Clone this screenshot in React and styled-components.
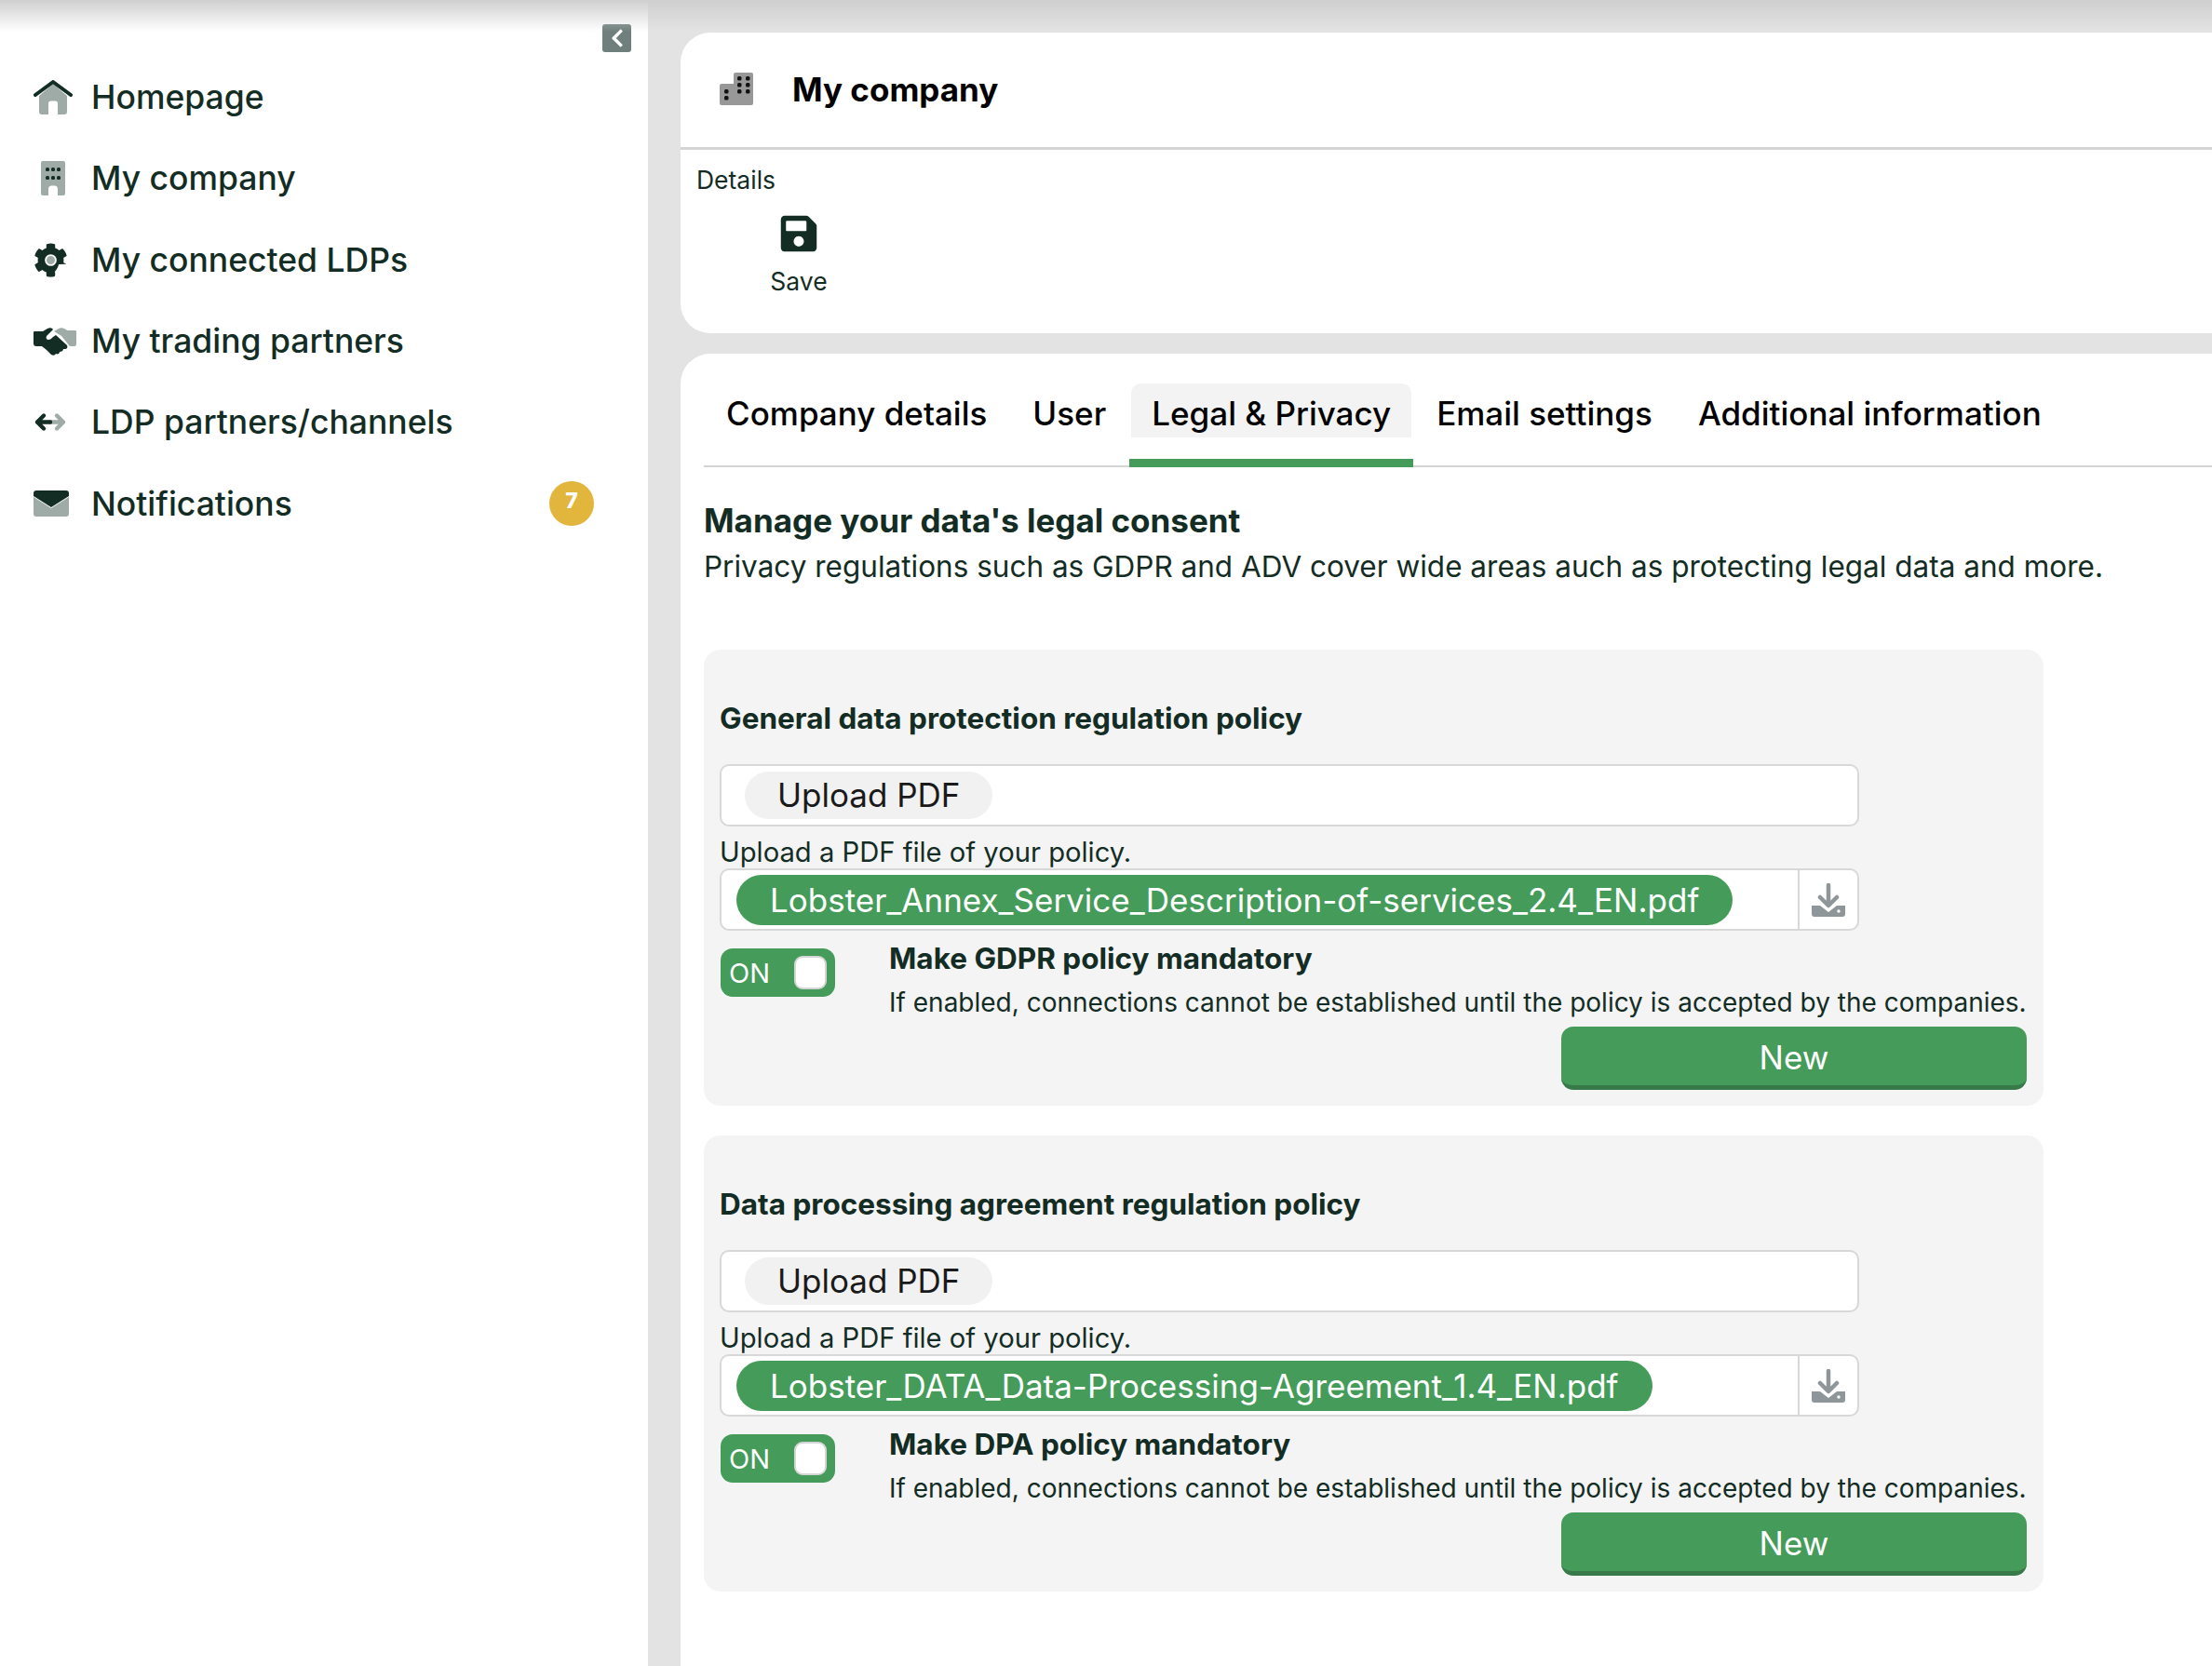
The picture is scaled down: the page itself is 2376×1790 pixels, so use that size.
import styled, { createGlobalStyle } from "styled-components";
import { FaSave, FaChevronLeft } from "react-icons/fa";

const GlobalStyle = createGlobalStyle`
html,body{
    margin:0;
    padding:0;
    height:1790px;
    overflow:hidden;
    background:#e3e3e3;
    font-family:"Inter","Liberation Sans",sans-serif;
    color:#132c24;
}
*{box-sizing:border-box;}
`

const Page = styled.div`
position:relative;
display:flex;
width:2376px;
height:1790px;
overflow:hidden;
background:#e3e3e3;
`
const TopShade = styled.div`
position:absolute;
top:0;
left:0;
right:0;
height:34px;
background:linear-gradient(#cfcfcf,rgba(207,207,207,0));
pointer-events:none;
`
const Sidebar = styled.aside`
flex:0 0 696px;
background:#fff;
padding:26px 18px 0 36px;
`
const CollapseRow = styled.div`
display:flex;
justify-content:flex-end;
height:30px;
margin-bottom:5px;
`
const CollapseBtn = styled.button`
width:31px;
height:30px;
padding:0;
border:0;
border-radius:3px;
background:#6f807c;
color:#fff;
display:flex;
align-items:center;
justify-content:center;
font-size:22px;
`
const NavList = styled.nav`
display:flex;
flex-direction:column;
`
const NavItem = styled.div`
display:flex;
align-items:center;
height:87.300px;
font-size:35.500px;
font-weight:500;
color:#132c24;
`
const NavIcon = styled.span`
flex:0 0 62px;
width:62px;
display:flex;
svg{display:block;}
`
const NavLabel = styled.span`
flex:1;
`
const Badge = styled.span`
width:48px;
height:48px;
border-radius:50%;
background:#e2b53c;
color:#fff;
font-size:23px;
font-weight:800;
display:flex;
align-items:center;
justify-content:center;
margin-right:40px;
padding-bottom:6px;
`
const Main = styled.main`
flex:1;
min-width:0;
padding:35px 0 0 35px;
display:flex;
flex-direction:column;
gap:22px;
`
const DetailsCard = styled.section`
height:323px;
background:#fff;
border-radius:32px 0 0 32px;
`
const CardHeader = styled.header`
height:126px;
border-bottom:3px solid #d5d5d5;
display:flex;
align-items:center;
padding:0 0 2px 42px;
gap:42px;
`
const CardTitle = styled.h1`
margin:0;
font-size:35px;
font-weight:700;
color:#000;
`
const DetailsBody = styled.div`
padding:15px 0 0 17px;
`
const SmallLabel = styled.div`
font-size:26.500px;
line-height:34px;
`
const SaveAction = styled.div`
width:120px;
margin:19px 0 0 50px;
display:flex;
flex-direction:column;
align-items:center;
gap:12px;
color:#132c24;
font-size:26.500px;
line-height:34px;
`
const ContentCard = styled.section`
flex:1;
background:#fff;
border-radius:32px 0 0 0;
padding:0 0 0 25px;
`
const TabRow = styled.div`
height:122px;
display:flex;
align-items:flex-end;
gap:1px;
border-bottom:2px solid #d5d5d5;
`
const Tab = styled.div`
position:relative;
height:100%;
padding:32px 24px 0;
font-size:35px;
font-weight:500;
line-height:64px;
color:#000;
white-space:nowrap;
&::before{
    content:"";
    display:${p => (p.$active ? "block" : "none")};
    position:absolute;
    z-index:0;
    left:2px;
    right:2px;
    top:32px;
    height:58px;
    border-radius:10px 10px 0 0;
    background:#f3f3f3;
}
&::after{
    content:"";
    display:${p => (p.$active ? "block" : "none")};
    position:absolute;
    left:0;
    right:0;
    bottom:-2px;
    height:9px;
    background:#459b59;
}
`
const TabText = styled.span`
position:relative;
z-index:1;
`
const Intro = styled.div`
margin-top:33px;
`
const IntroTitle = styled.h2`
margin:0;
font-size:35px;
line-height:48px;
font-weight:700;
`
const IntroText = styled.p`
margin:3px 0 0;
font-size:31.500px;
line-height:46px;
font-weight:400;
`
const PanelStack = styled.div`
margin-top:66px;
width:1439px;
display:flex;
flex-direction:column;
gap:32px;
`
const Panel = styled.div`
height:490px;
background:#f4f4f4;
border-radius:18px;
padding:52px 18px 0 17px;
`
const PanelTitle = styled.h3`
margin:0 0 27px;
font-size:31.500px;
line-height:44px;
font-weight:700;
`
const FieldBox = styled.div`
width:1224px;
height:67px;
background:#fff;
border:2px solid #d8d8d8;
border-radius:10px;
display:flex;
align-items:center;
`
const UploadPill = styled.span`
margin-left:25px;
height:51px;
padding:0 35px;
border-radius:26px;
background:#f1f1f1;
color:#1a1a1a;
font-size:35px;
line-height:51px;
`
const Hint = styled.div`
height:45px;
padding-top:10px;
font-size:29.200px;
line-height:36px;
`
const FileSlot = styled.div`
flex:1;
min-width:0;
display:flex;
padding-left:16px;
`
const FilePill = styled.span`
height:54px;
padding:0 36px;
border-radius:27px;
background:#459b59;
color:#fff;
font-size:35px;
line-height:54px;
white-space:nowrap;
`
const DownloadCell = styled.div`
flex:0 0 64px;
height:100%;
border-left:2px solid #d8d8d8;
display:flex;
align-items:center;
justify-content:center;
`
const ToggleRow = styled.div`
display:flex;
margin-top:10px;
`
const Toggle = styled.div`
flex:0 0 123px;
height:52px;
margin:9px 58px 0 1px;
padding:0 9px;
border-radius:13px;
background:#459b59;
color:#fff;
font-size:29px;
display:flex;
align-items:center;
justify-content:space-between;
`
const Knob = styled.span`
width:35px;
height:36px;
border-radius:9px;
background:#fff;
border:2px solid #d5d5d5;
`
const ToggleText = styled.div`
min-width:0;
`
const ToggleTitle = styled.div`
font-size:31.500px;
line-height:40px;
font-weight:700;
`
const ToggleDesc = styled.div`
margin-top:7px;
font-size:28px;
line-height:40px;
white-space:nowrap;
`
const ActionRow = styled.div`
display:flex;
justify-content:flex-end;
margin-top:6px;
`
const NewButton = styled.button`
width:500px;
height:68px;
padding:3px 0 0;
border:0;
border-bottom:5px solid #38794a;
border-radius:13px;
background:#459b59;
color:#fff;
font-family:inherit;
font-size:35px;
`

// duotone style icons, dark stroke over a lighter base
const HomeIcon = () => (
    <svg width="42" height="37" viewBox="0 0 42 37">
        <path d="M6 17 21 4l15 13v17a3 3 0 0 1-3 3h-7V25a2.500 2.500 0 0 0-2.500-2.500h-5A2.500 2.500 0 0 0 16 25v12H9a3 3 0 0 1-3-3z" fill="#9faba7" />
        <path d="M2 16 21 2l19 14" fill="none" stroke="#132c24" strokeWidth="4" strokeLinecap="round" strokeLinejoin="round" />
    </svg>
)
const BuildingIcon = () => (
    <svg width="42" height="37" viewBox="0 0 42 37">
        <path d="M7 2a2 2 0 0 1 2-2h22a2 2 0 0 1 2 2v33a2 2 0 0 1-2 2h-6v-7a3.500 3.500 0 0 0-3.500-3.500h-3A3.500 3.500 0 0 0 15 30v7H9a2 2 0 0 1-2-2z" fill="#9faba7" transform="translate(1 0)" />
        {[13, 19, 25].map(x => [9, 18].map(y => <rect key={x + "-" + y} x={x} y={y - 2} width="4" height="4" rx="1.500" fill="#132c24" />))}
    </svg>
)
const GearIcon = () => (
    <svg width="42" height="37" viewBox="0 0 512 512" preserveAspectRatio="xMinYMid meet">
        <path d="M487 316l-42-25a191 191 0 0 0 0-70l42-25c5-3 7-9 5-14-11-35-30-67-54-93-4-4-10-5-15-2l-42 25a187 187 0 0 0-60-35V28c0-6-4-11-9-12a195 195 0 0 0-112 0c-5 1-9 6-9 12v49a193 193 0 0 0-60 35L89 88c-5-3-11-2-15 2-24 26-43 58-54 93-2 5 0 11 5 14l42 25a191 191 0 0 0 0 70l-42 25c-5 3-7 9-5 14 11 35 30 67 54 93 4 4 10 5 15 2l42-25a187 187 0 0 0 60 35v49c0 6 4 11 9 12a195 195 0 0 0 112 0c5-1 9-6 9-12v-49a193 193 0 0 0-60-35l42 25c5 3 11 2 15-2 24-26 43-58 54-93 2-5 0-11-5-14z" fill="#132c24" />
        <circle cx="256" cy="256" r="88" fill="#fff" />
        <circle cx="256" cy="256" r="62" fill="#9faba7" />
    </svg>
)
const HandshakeIcon = () => (
    <svg width="46" height="30" viewBox="0 0 46 30">
        <path d="M22 4l5-3c2-1 4-1 6 0l3 2h9a1 1 0 0 1 1 1v14a2 2 0 0 1-2 2h-5L30 9z" fill="#9faba7" />
        <path d="M0 5a1 1 0 0 1 1-1h9l5-3c2-1 4-1 5 0l1 1-7 7c-1 2 0 4 2 4s3-1 5-3l3-2 12 11c1 2 0 4-2 4l-2 0c0 2-2 3-4 3 0 2-2 3-4 2-1 2-3 2-5 1l-3-3-2-2-5-4H3a3 3 0 0 1-3-3z" fill="#132c24" />
    </svg>
)
const ArrowsIcon = () => (
    <svg width="36" height="21" viewBox="0 0 38 24">
        <path d="M19 12h16M27 4l8 8-8 8" fill="none" stroke="#9faba7" strokeWidth="5" strokeLinecap="round" strokeLinejoin="round" />
        <path d="M19 12H3M11 4l-8 8 8 8" fill="none" stroke="#132c24" strokeWidth="5" strokeLinecap="round" strokeLinejoin="round" />
    </svg>
)
const EnvelopeIcon = () => (
    <svg width="38" height="28" viewBox="0 0 38 28">
        <path d="M0 7 19 19 38 7v18a3 3 0 0 1-3 3H3a3 3 0 0 1-3-3z" fill="#9faba7" />
        <path d="M3 0h32a3 3 0 0 1 3 3v3L19 18 0 6V3a3 3 0 0 1 3-3z" fill="#132c24" />
    </svg>
)
const CityIcon = () => (
    <svg width="36" height="35" viewBox="0 0 36 35">
        <path d="M15 12V2a2 2 0 0 1 2-2h17a2 2 0 0 1 2 2v31a2 2 0 0 1-2 2H2a2 2 0 0 1-2-2V14a2 2 0 0 1 2-2z" fill="#989898" />
        {[[19, 4], [28, 4], [19, 11], [28, 11], [19, 18], [28, 18], [5, 18], [5, 25]].map(([x, y]) => (
            <rect key={x + "-" + y} x={x} y={y} width="4.500" height="4.500" rx="1.500" fill="#111" />
        ))}
    </svg>
)
const DownloadIcon = () => (
    <svg width="36" height="36" viewBox="0 0 36 36">
        <path d="M0 24h9l9 7 9-7h9v9a3 3 0 0 1-3 3H3a3 3 0 0 1-3-3z" fill="#8f9699" />
        <path d="M18 2v21M9 15l9 9 9-9" fill="none" stroke="#8f9699" strokeWidth="4.500" strokeLinecap="round" strokeLinejoin="round" />
        <circle cx="29" cy="30" r="1.700" fill="#fff" />
    </svg>
)

const navItems = [
    { label: "Homepage", icon: <HomeIcon /> },
    { label: "My company", icon: <BuildingIcon /> },
    { label: "My connected LDPs", icon: <GearIcon /> },
    { label: "My trading partners", icon: <HandshakeIcon /> },
    { label: "LDP partners/channels", icon: <ArrowsIcon /> },
    { label: "Notifications", icon: <EnvelopeIcon />, badge: 7 },
]
const tabs = ["Company details", "User", "Legal & Privacy", "Email settings", "Additional information"]
const policies = [
    {
        title: "General data protection regulation policy",
        file: "Lobster_Annex_Service_Description-of-services_2.4_EN.pdf",
        mandatory: "Make GDPR policy mandatory",
    },
    {
        title: "Data processing agreement regulation policy",
        file: "Lobster_DATA_Data-Processing-Agreement_1.4_EN.pdf",
        mandatory: "Make DPA policy mandatory",
    },
]

const App = () => {
    return (
        <>
            <GlobalStyle />
            <Page>
                <Sidebar>
                    <CollapseRow>
                        <CollapseBtn><FaChevronLeft /></CollapseBtn>
                    </CollapseRow>
                    <NavList>
                        {navItems.map((item) => (
                            <NavItem key={item.label}>
                                <NavIcon>{item.icon}</NavIcon>
                                <NavLabel>{item.label}</NavLabel>
                                {item.badge && <Badge>{item.badge}</Badge>}
                            </NavItem>
                        ))}
                    </NavList>
                </Sidebar>
                <Main>
                    <DetailsCard>
                        <CardHeader>
                            <CityIcon />
                            <CardTitle>My company</CardTitle>
                        </CardHeader>
                        <DetailsBody>
                            <SmallLabel>Details</SmallLabel>
                            <SaveAction>
                                <FaSave size={44} />
                                Save
                            </SaveAction>
                        </DetailsBody>
                    </DetailsCard>
                    <ContentCard>
                        <TabRow>
                            {tabs.map((tab) => (
                                <Tab key={tab} $active={tab === "Legal & Privacy"}>
                                    <TabText>{tab}</TabText>
                                </Tab>
                            ))}
                        </TabRow>
                        <Intro>
                            <IntroTitle>Manage your data's legal consent</IntroTitle>
                            <IntroText>Privacy regulations such as GDPR and ADV cover wide areas auch as protecting legal data and more.</IntroText>
                        </Intro>
                        <PanelStack>
                            {policies.map((policy) => (
                                <Panel key={policy.title}>
                                    <PanelTitle>{policy.title}</PanelTitle>
                                    <FieldBox>
                                        <UploadPill>Upload PDF</UploadPill>
                                    </FieldBox>
                                    <Hint>Upload a PDF file of your policy.</Hint>
                                    <FieldBox>
                                        <FileSlot>
                                            <FilePill>{policy.file}</FilePill>
                                        </FileSlot>
                                        <DownloadCell><DownloadIcon /></DownloadCell>
                                    </FieldBox>
                                    <ToggleRow>
                                        <Toggle>ON<Knob /></Toggle>
                                        <ToggleText>
                                            <ToggleTitle>{policy.mandatory}</ToggleTitle>
                                            <ToggleDesc>If enabled, connections cannot be established until the policy is accepted by the companies.</ToggleDesc>
                                        </ToggleText>
                                    </ToggleRow>
                                    <ActionRow>
                                        <NewButton>New</NewButton>
                                    </ActionRow>
                                </Panel>
                            ))}
                        </PanelStack>
                    </ContentCard>
                </Main>
                <TopShade />
            </Page>
        </>
    )
}

export default App
